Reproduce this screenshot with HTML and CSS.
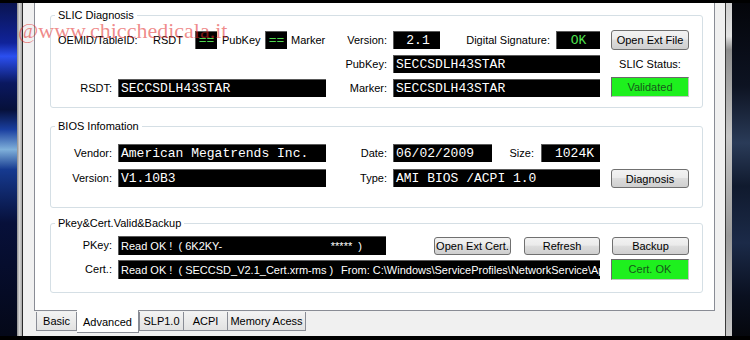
FILE: index.html
```html
<!DOCTYPE html>
<html lang="en">
<head>
  <meta charset="UTF-8">
  <meta name="viewport" content="width=device-width, initial-scale=1.0">
  <title>SLIC Toolkit - Advanced</title>
  <link rel="stylesheet" href="styles.css">
</head>
<body>
  <div class="top-bar"></div>

  <div class="desk">
    <div class="wall-left"></div>
    <div class="frame-left"></div>

    <div class="window">
      <div class="tab-panel">

        <!-- SLIC -->
        <div class="group group-slic">
          <span class="group-title">SLIC Diagnosis</span>
          <div class="rows">
            <div class="oem">
              <span class="oem-label">OEMID/TableID:</span>
              <span class="oem-name">RSDT</span>
              <span class="box eq">==</span>
              <span class="oem-pub">PubKey</span>
              <span class="box eq">==</span>
              <span class="oem-marker">Marker</span>
            </div>
            <span class="label">Version:</span>
            <div class="pair">
              <span class="box ver">2.1</span>
              <span class="sub-label">Digital Signature:</span>
              <span class="box ok">OK</span>
            </div>
            <button class="btn btn-top">Open Ext File</button>

            <span class="label col-c">PubKey:</span>
            <span class="box field-d">SECCSDLH43STAR</span>
            <span class="status-label">SLIC Status:</span>

            <span class="label">RSDT:</span>
            <span class="box">SECCSDLH43STAR</span>
            <span class="label">Marker:</span>
            <span class="box field-d">SECCSDLH43STAR</span>
            <span class="green green-slic">Validated</span>
          </div>
        </div>

        <!-- BIOS -->
        <div class="group group-bios">
          <span class="group-title">BIOS Infomation</span>
          <div class="rows">
            <span class="label">Vendor:</span>
            <span class="box">American Megatrends Inc.</span>
            <span class="label">Date:</span>
            <div class="pair">
              <span class="box date">06/02/2009</span>
              <span class="sub-label size-label">Size:</span>
              <span class="box size">1024K</span>
            </div>
            <span></span>

            <span class="label">Version:</span>
            <span class="box">V1.10B3</span>
            <span class="label">Type:</span>
            <span class="box field-d">AMI BIOS /ACPI 1.0</span>
            <button class="btn btn-diag">Diagnosis</button>
          </div>
        </div>

        <!-- Key / cert -->
        <div class="group group-key">
          <span class="group-title">Pkey&amp;Cert.Valid&amp;Backup</span>
          <div class="rows">
            <span class="label">PKey:</span>
            <div class="key-row">
              <span class="box text-box pkey"><span>Read OK !  ( 6K2KY-</span><span>*****  )</span></span>
              <button class="btn btn-cert">Open Ext Cert.</button>
              <button class="btn btn-refresh">Refresh</button>
              <button class="btn btn-backup">Backup</button>
            </div>

            <span class="label">Cert.:</span>
            <span class="box text-box cert"><span class="cert-name">Read OK !  ( SECCSD_V2.1_Cert.xrm-ms )</span><span>From: C:\Windows\ServiceProfiles\NetworkService\Ap</span></span>
            <span class="green green-cert">Cert. OK</span>
          </div>
        </div>

      </div>

      <div class="tabs">
        <span class="tab tab-basic">Basic</span>
        <span class="tab tab-active">Advanced</span>
        <span class="tab tab-slp">SLP1.0</span>
        <span class="tab tab-acpi">ACPI</span>
        <span class="tab tab-mem">Memory Acess</span>
      </div>
    </div>

    <div class="frame-right"></div>
    <div class="wall-right"></div>
  </div>

  <div class="watermark">@www.chicchedicala.it</div>
</body>
</html>
```

FILE: styles.css
```css
body {
  margin: 0;
  width: 750px;
  height: 340px;
  overflow: hidden;
  background-color: #000;
  font-family: "Liberation Sans", Arial, sans-serif;
  font-size: 11px;
  color: #000;
}

.top-bar {
  height: 3px;
  background-color: #000;
}

.desk {
  display: flex;
  height: 333px;
}

/* wallpaper + window frame */
.wall-left {
  width: 17px;
  background: linear-gradient(to bottom, #0a1450 0%, #10239a 12%, #2b4ff0 16%, #0a1860 24%, #06103a 32%, #1a3fa0 38%, #7fb0da 44%, #163a90 50%, #07103a 66%, #040818 100%);
}

.frame-left {
  width: 5px;
  border-right: 1px solid #2b2b2b;
  background: linear-gradient(to right, #8d8d8d, #d4d4d4 50%, #a5a5a5);
}

.frame-right {
  width: 6px;
  border-left: 1px solid #3a3a3a;
  background: linear-gradient(to bottom, #cfcfcf, #e2e2e2 10%, #8e8e8e 14%, #c6c6c6 40%, #9a9a9a 70%, #c8c8c8);
}

.wall-right {
  width: 18px;
  background: linear-gradient(to bottom, #04050a, #0d1322 25%, #2a3b58 42%, #101a2e 55%, #1b2a48 72%, #0a1020 88%, #05070d);
}

.window {
  flex: 1;
  background-color: #f0f0f0;
  padding: 0 10px 0 11px;
}

.tab-panel {
  background-color: #fff;
  border: 1px solid #898c95;
  border-top: none;
  padding: 12px 11px 17px 15px;
}

/* group boxes */
.group {
  box-sizing: border-box;
  border: 1px solid #d5dfe5;
  border-radius: 3px;
}

.group-title {
  display: block;
  width: fit-content;
  margin: -8px 0 0 4px;
  padding: 0 3px;
  background-color: #fff;
  line-height: 14px;
}

.group-slic {
  height: 93px;
}

.group-bios {
  height: 82px;
  margin-top: 18px;
}

.group-key {
  height: 70px;
  margin-top: 15px;
}

.rows {
  display: grid;
  grid-template-columns: 67px 208px 67px 218px 78px;
}

.group-slic .rows {
  margin-top: 9px;
  grid-auto-rows: 18px;
  row-gap: 6px;
}

.group-bios .rows {
  margin-top: 11px;
  grid-auto-rows: 18px;
  row-gap: 7px;
}

.group-key .rows {
  margin-top: 6px;
  grid-auto-rows: 19px;
  row-gap: 5px;
}

.label {
  padding-right: 6px;
  text-align: right;
  line-height: 18px;
  white-space: nowrap;
}

.col-c {
  grid-column: 3;
}

.box {
  box-sizing: border-box;
  padding-left: 2px;
  background-color: #000;
  border-top: 1px solid #5a5a5a;
  border-left: 1px solid #5a5a5a;
  color: #fff;
  font-family: "Liberation Mono", "Courier New", monospace;
  font-size: 13px;
  line-height: 17px;
  white-space: nowrap;
  overflow: hidden;
}

.field-d {
  width: 207px;
}

/* first row of SLIC */
.oem {
  grid-column: 1 / 3;
  display: flex;
  padding-left: 7px;
  line-height: 18px;
  white-space: nowrap;
}

.oem-label {
  width: 95px;
}

.oem-name {
  width: 42px;
}

.oem-pub {
  width: 43px;
  margin-left: 5px;
}

.oem-marker {
  margin-left: 4px;
}

.eq {
  width: 22px;
  padding: 0;
  text-align: center;
  color: #4fd84f;
}

.pair {
  display: flex;
  width: 207px;
  white-space: nowrap;
}

.sub-label {
  flex: 1;
  padding-right: 6px;
  text-align: right;
  line-height: 18px;
}

.ver {
  width: 47px;
  text-align: center;
}

.ok {
  width: 44px;
  padding: 0;
  text-align: center;
  color: #4fe24f;
}

.date {
  width: 99px;
}

.size-label {
  padding-right: 7px;
}

.size {
  width: 59px;
  padding-left: 13px;
}

.status-label {
  grid-column: 5;
  text-align: center;
  line-height: 18px;
  white-space: nowrap;
}

/* buttons */
.btn {
  box-sizing: border-box;
  width: 78px;
  height: 20px;
  padding: 0;
  border: 1px solid #707070;
  border-radius: 3px;
  background: linear-gradient(#f2f2f2, #ebebeb 45%, #dddddd 50%, #cfcfcf);
  color: #000;
  font-family: inherit;
  font-size: 11px;
  white-space: nowrap;
}

.btn-top {
  margin-top: -1px;
}

.btn-diag {
  height: 19px;
}

.key-row {
  grid-column: 2 / 6;
  display: flex;
}

.key-row .btn {
  height: 18px;
  margin-top: 1px;
}

.btn-cert {
  width: 77px;
  margin-left: 48px;
}

.btn-refresh {
  width: 76px;
  margin-left: 13px;
}

.btn-backup {
  width: 77px;
  margin-left: 12px;
}

.green {
  box-sizing: border-box;
  height: 20px;
  border: 1px solid;
  border-color: #6a6a6a #c4c4c4 #c4c4c4 #6a6a6a;
  background-color: #1ef01e;
  color: #17561a;
  text-align: center;
  line-height: 18px;
}

.green-slic {
  margin-top: -2px;
}

.green-cert {
  height: 21px;
  margin-top: -1px;
  line-height: 19px;
}

/* sans text in black boxes */
.text-box {
  display: flex;
  font-family: "Liberation Sans", Arial, sans-serif;
  font-size: 11px;
  line-height: 18px;
  white-space: pre;
}

.pkey {
  width: 268px;
  justify-content: space-between;
  padding-right: 24px;
}

.cert {
  grid-column: 2 / 5;
  width: 482px;
}

.cert-name {
  flex: none;
  width: 220px;
}

/* tabs */
.tabs {
  display: flex;
  align-items: flex-start;
  margin: -1px 0 0 2px;
  white-space: nowrap;
}

.tab {
  box-sizing: border-box;
  height: 19px;
  margin-top: 2px;
  border: 1px solid #898c95;
  border-top: none;
  background: linear-gradient(#f3f3f3, #e2e2e2);
  text-align: center;
  line-height: 18px;
}

.tab-basic {
  width: 41px;
}

.tab-active {
  width: 62px;
  height: 23px;
  margin-top: 0;
  padding-top: 2px;
  border-left: none;
  background: #fff;
  line-height: 20px;
}

.tab-slp {
  width: 45px;
}

.tab-acpi {
  width: 45px;
  margin-left: -1px;
}

.tab-mem {
  width: 79px;
  margin-left: -1px;
}

.watermark {
  position: absolute;
  left: 18px;
  top: 20px;
  font-family: "Liberation Serif", "Times New Roman", serif;
  font-size: 22px;
  line-height: 22px;
  color: rgba(226, 40, 40, 0.55);
  white-space: nowrap;
}
```
